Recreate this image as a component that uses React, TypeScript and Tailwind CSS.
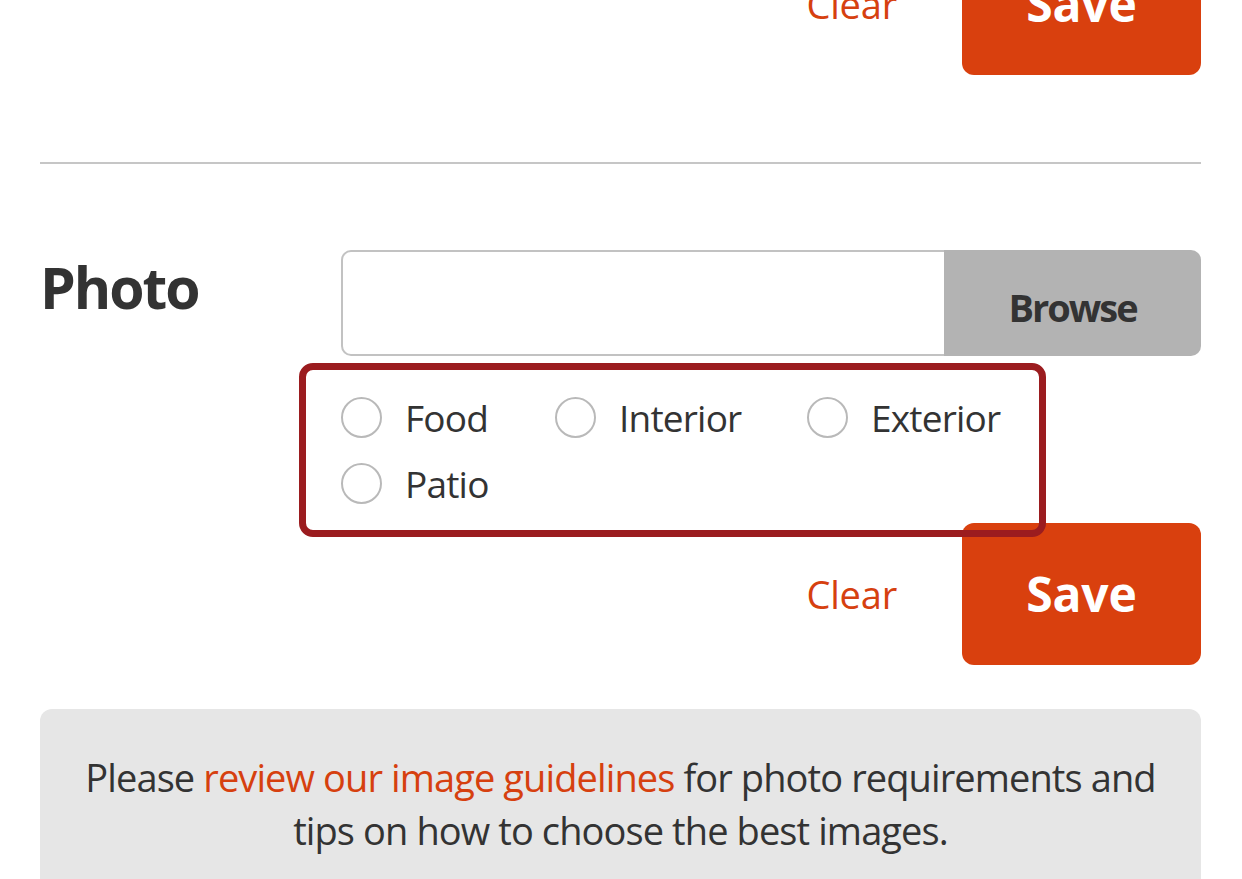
import { useState } from "react";

const kinds = ["Food", "Interior", "Exterior", "Patio"];

function Actions() {
  return (
    <div className="flex items-center justify-end gap-[65px]">
      <button className="text-[38px] leading-none tracking-[-0.2px] text-[#d6400f]">
        Clear
      </button>
      <button className="w-[239px] h-[142px] rounded-[12px] bg-[#d9400e] text-white text-[48px] font-bold leading-none tracking-[-0.2px]">
        Save
      </button>
    </div>
  );
}

export default function App() {
  const [kind, setKind] = useState("");

  return (
    <div
      className="min-h-screen bg-white text-[#333333] pl-[40px] pr-[41px] overflow-hidden"
      style={{ fontFamily: '"Open Sans", "Noto Sans", sans-serif' }}
    >
      {/* previous section, scrolled off the top */}
      <div className="-mt-[67px]">
        <Actions />
      </div>

      <hr className="mt-[87px] border-0 border-t-2 border-[#c6c6c6]" />

      {/* Photo */}
      <div className="mt-[86px] flex">
        <div className="w-[301px] pt-[9px]">
          <h2 className="text-[57px] font-bold leading-none tracking-[-2px] text-[#333333]">
            Photo
          </h2>
        </div>

        <div className="relative w-[860px]">
          <div className="flex h-[106px]">
            <div className="w-[603px] border-2 border-r-0 border-[#c2c2c2] rounded-l-[10px] bg-white" />
            <button className="w-[257px] rounded-r-[10px] bg-[#b3b3b3] pt-[8px] text-[38px] font-bold tracking-[-2px] text-[#333333]">
              Browse
            </button>
          </div>

          <div className="mt-[41px] grid grid-cols-[214px_252px_1fr] gap-y-[25px]">
            {kinds.map((k) => (
              <label key={k} className="flex items-center gap-[23px] cursor-pointer">
                <span
                  onClick={() => setKind(k)}
                  className="flex h-[41px] w-[41px] items-center justify-center rounded-full border-2 border-[#b9b9b9] bg-white"
                >
                  {kind === k && <span className="h-[19px] w-[19px] rounded-full bg-[#d9400e]" />}
                </span>
                <span className="text-[37px] leading-none tracking-[-0.8px] text-[#333333]">
                  {k}
                </span>
              </label>
            ))}
          </div>

          <div className="mt-[19px]">
            <Actions />
          </div>

          {/* highlight */}
          <div className="pointer-events-none absolute left-[-42px] top-[113px] h-[174px] w-[747px] rounded-[14px] border-[7px] border-[#9b1c1f]" />
        </div>
      </div>

      {/* guidelines note */}
      <div className="mt-[44px] rounded-[12px] bg-[#e6e6e6] pt-[42px] pb-[80px] text-center text-[38px] leading-[53px] tracking-[-0.9px] text-[#333333]">
        Please <a className="text-[#d6400f]">review our image guidelines</a> for photo requirements and
        <br />
        tips on how to choose the best images.
      </div>
    </div>
  );
}
